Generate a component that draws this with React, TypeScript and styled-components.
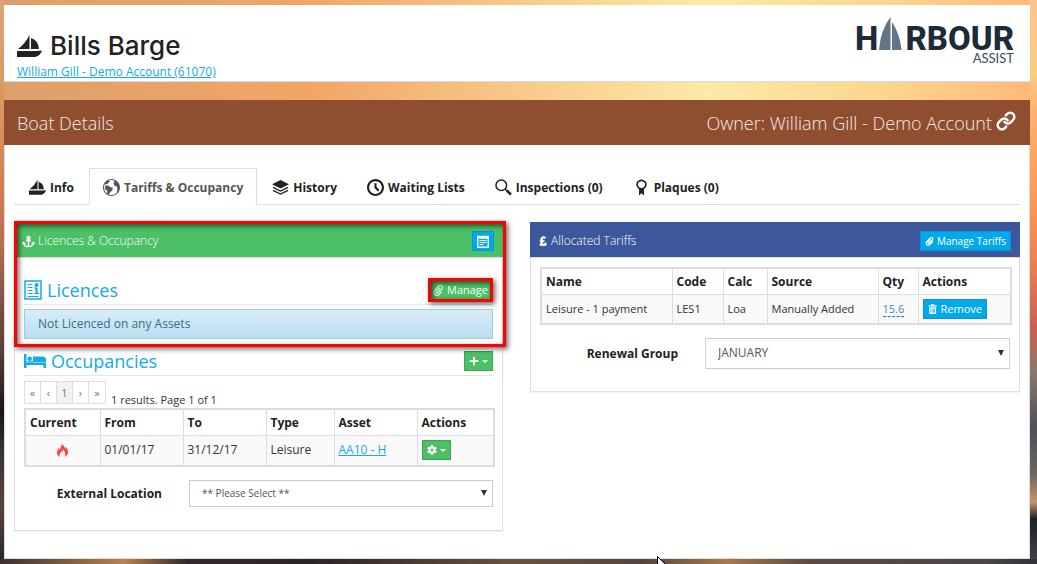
import React from 'react';
import styled, { createGlobalStyle, css } from 'styled-components';
import { FaAnchor, FaCog, FaPaperclip, FaPlus, FaPoundSign } from 'react-icons/fa';
import { ImAttachment, ImBin, ImClock, ImEarth, ImFire } from 'react-icons/im';
import { Link as ChainIcon } from 'lucide-react';

const GlobalStyle = createGlobalStyle`
  * { box-sizing: border-box; }
  html { min-height: 100%; }
  body {
    margin: 0;
    min-height: 100vh;
    font-family: "Open Sans", "Noto Sans", sans-serif;
    font-size: 12px;
    line-height: 16px;
    color: #333;
    background:
      linear-gradient(90deg, #3a3030, #b98250 12%, #33292b 18%, #2b2426 30%, #6b5140 50%, #54453f 62%, #a87a4e 70%, #5c4a44 78%, #4a4548 95%, #33333b) bottom / 100% 5px no-repeat,
      linear-gradient(180deg, #dba574, #d9965f 20%, #d28152 32%, #c06f4e 42%, #8a5548 52%, #5a4038 62%, #1c1313 73%, #3a3233 80%, #55463d 90%, #2a2426) left / 4px 100% no-repeat,
      linear-gradient(180deg, #ffc38a, #fdcb84 13%, #ffb070 20%, #ff9a58 34%, #f08050 46%, #cc6050 58%, #8a7868 66%, #50505a 76%, #6a6660 84%, #c89468 89%, #202028 92%, #44444a) right / 7px 100% no-repeat,
      linear-gradient(90deg, #dca06c, #f2a566 30%, #fde9a8 68%, #fbd68f 85%, #ffb878);
  }
`;

const Page = styled.div`
  display: flex;
  flex-direction: column;
  gap: 18px;
  padding: 5px 7px 5px 4px;
  min-height: 100vh;
`;

const TitleCard = styled.header`
  display: flex;
  justify-content: space-between;
  height: 77px;
  padding: 12px 16px 0 13px;
  background: #fff;
  border-bottom: 1px solid #ddd;
`;

const TitleBlock = styled.div`
  display: flex;
  flex-direction: column;
  padding-top: 11px;
`;

const BoatName = styled.h1`
  display: flex;
  align-items: center;
  gap: 8px;
  margin: 0;
  font: 500 26px/36px Inter, sans-serif;
  color: #222;
`;

const Link = styled.a`
  color: #12ace8;
  text-decoration: underline;
`;

const MainCard = styled.main`
  flex: 1;
  background: #fff;
  border: 1px solid #ddd;
  border-top: 0;
`;

const Banner = styled.div`
  display: flex;
  align-items: center;
  justify-content: space-between;
  height: 45px;
  margin: 0 -1px;
  padding: 0 14px 0 13px;
  background: #904e31;
  color: #f6ebe5;
  font-size: 18px;
  font-weight: 300;
  line-height: 24px;
`;

const Owner = styled.span`
  display: flex;
  align-items: center;
  gap: 4px;
  svg { color: #fff; margin-bottom: 3px; }
`;

const BannerTitle = styled.h2`
  margin: 0;
  font: inherit;
`;

const Tabs = styled.nav`
  display: flex;
  margin: 23px 9px 0;
  border-bottom: 1px solid #ddd;
`;

const Tab = styled.button<{ $active?: boolean }>`
  display: flex;
  align-items: center;
  gap: 4px;
  height: 37px;
  margin-bottom: -1px;
  padding: 2px 14px 0;
  border: 1px solid transparent;
  background: none;
  color: #222;
  font: 700 12px/16px "Open Sans", sans-serif;
  ${(p) => p.$active && css`
    padding: 2px 13px 0;
    color: #555;
    background: #fff;
    border-color: #ddd #ddd #fff;
  `}
`;

const Columns = styled.div`
  display: grid;
  grid-template-columns: minmax(0, 489fr) minmax(0, 490fr);
  align-items: start;
  gap: 27px;
  padding: 17px 9px 27px;
`;

const Panel = styled.section`
  border: 1px solid #ddd;
  border-top: 0;
  box-shadow: 0 1px 1px rgba(0, 0, 0, 0.05);
`;

const PanelHead = styled.div<{ $color: string }>`
  display: flex;
  align-items: center;
  justify-content: space-between;
  height: 36px;
  margin: 0 -1px;
  padding: 3px 9px 0 8px;
  background: ${(p) => p.$color};
  border-bottom: 1px solid #ddd;
`;

const PanelTitle = styled.h3`
  display: flex;
  align-items: center;
  gap: 3px;
  margin: 0;
  color: #fff;
  font-size: 12px;
  font-weight: 300;
`;

const Button = styled.button<{ $tone?: 'green' | 'blue'; $compact?: boolean }>`
  display: inline-flex;
  align-items: center;
  justify-content: center;
  gap: 3px;
  height: 20px;
  padding: 0 4px;
  border: 1px solid ${(p) => (p.$tone === 'green' ? '#3da458' : '#0d94d0')};
  background: ${(p) => (p.$tone === 'green' ? '#4bc067' : '#00a9ec')};
  color: #fff;
  font: 400 ${(p) => (p.$compact ? 10 : 11)}px/16px "Open Sans", sans-serif;
  white-space: nowrap;
`;

const Marked = styled.div<{ $inset: string }>`
  position: relative;
  &::after {
    content: '';
    position: absolute;
    inset: ${(p) => p.$inset};
    border: 3px solid #f00;
    box-shadow: 2px 2px 5px rgba(0, 0, 0, 0.6), inset 2px 2px 5px rgba(0, 0, 0, 0.6);
    pointer-events: none;
  }
`;

const MarkedButton = styled(Marked)`
  display: flex;
`;

const Section = styled.div<{ $top?: number }>`
  padding: ${(p) => p.$top ?? 0}px 9px 0;
`;

const SectionHead = styled.div`
  display: flex;
  align-items: center;
  justify-content: space-between;
  height: 29px;
  border-bottom: 1px solid #e5e5e5;
`;

const SectionTitle = styled.h4`
  display: flex;
  align-items: center;
  gap: 5px;
  margin: 0;
  color: #12ace8;
  font-size: 18px;
  font-weight: 400;
  line-height: 24px;
`;

const Alert = styled.div`
  margin-top: 4px;
  padding: 6px 13px;
  border: 1px solid #9acfea;
  background: linear-gradient(#d9edf7, #b9def0);
  color: #31708f;
`;

const Pager = styled.div`
  display: flex;
  align-items: flex-end;
  gap: 5px;
  height: 32px;
  font-size: 11px;
`;

const PageButtons = styled.div`
  display: flex;
  margin-bottom: 4px;
  border: 1px solid #ddd;
`;

const PageButton = styled.button<{ $current?: boolean }>`
  width: 16px;
  height: 21px;
  padding: 0;
  border: 0;
  border-right: 1px solid #ddd;
  background: ${(p) => (p.$current ? '#f2f2f2' : '#fff')};
  color: #777;
  font: 400 11px/16px "Open Sans", sans-serif;
  &:last-child { border-right: 0; }
`;

const Table = styled.table<{ $small?: boolean }>`
  width: 100%;
  table-layout: fixed;
  border-collapse: collapse;
  border: 2px solid #ddd;
  th, td {
    padding: 5px 4px 4px;
    border: 1px solid #ddd;
    text-align: left;
    white-space: nowrap;
  }
  th { font-weight: 700; color: #222; }
  td {
    height: ${(p) => (p.$small ? 29 : 30)}px;
    padding: 0 4px;
    background: #f9f9f9;
    font-size: ${(p) => (p.$small ? 11 : 12)}px;
  }
  button { vertical-align: middle; }
`;

const Col = styled.col<{ $w: number }>`
  width: ${(p) => p.$w}px;
`;

const Flame = styled.span`
  display: flex;
  justify-content: center;
  color: #f74844;
`;

const Editable = styled.a`
  color: #428bca;
  text-decoration: none;
  border-bottom: 1px dashed #0088cc;
`;

const Field = styled.div<{ $tall?: boolean }>`
  display: grid;
  grid-template-columns: 138px 1fr;
  align-items: center;
  column-gap: 27px;
  margin-top: 13px;
  padding-bottom: ${(p) => (p.$tall ? 22 : 23)}px;
`;

const Label = styled.label`
  padding-top: 1px;
  font-weight: 700;
  color: #222;
  text-align: right;
`;

const SelectBox = styled.div`
  position: relative;
  svg { position: absolute; right: 6px; top: 50%; margin-top: -3px; pointer-events: none; }
`;

const Select = styled.select<{ $tall?: boolean }>`
  appearance: none;
  display: block;
  width: 100%;
  height: ${(p) => (p.$tall ? 31 : 27)}px;
  padding: 0 12px;
  border: 1px solid #ccc;
  border-radius: 0;
  background: #fff;
  color: #555;
  font: 400 ${(p) => (p.$tall ? 12 : 10)}px/16px "Open Sans", sans-serif;
`;

const Pointer = styled.svg`
  position: absolute;
  left: 657px;
  top: 556px;
  height: 8px;
`;

const Boat = ({ size }: { size: number }) => (
  <svg width={size} height={size} viewBox="0 0 25 25" fill="currentColor" aria-hidden="true">
    <path d="M12.500 1v14H1Q8 10 12.500 1ZM14 4Q21 6 22 15h-8ZM0 17h19l6-.5Q23 22 18 23H0Z" />
  </svg>
);

const Layers = () => (
  <svg width="17" height="17" viewBox="0 0 17 17" fill="none" stroke="currentColor" aria-hidden="true">
    <path d="M8.500 1 17 5.200 8.500 9.500 0 5.200Z" fill="currentColor" stroke="none" />
    <path d="m1 8.300 7.500 3.700L16 8.300M1 11.300 8.500 15 16 11.300" strokeWidth="1.300" />
  </svg>
);

const Magnifier = () => (
  <svg width="17" height="17" viewBox="0 0 17 17" fill="none" stroke="currentColor" aria-hidden="true">
    <circle cx="6.300" cy="6.300" r="5.300" strokeWidth="1.500" />
    <path d="m10.200 10.200 1.800 1.600" strokeWidth="1.500" />
    <path d="m11.700 11.500 4.300 4" strokeWidth="2.600" />
  </svg>
);

const Rosette = () => (
  <svg width="17" height="17" viewBox="0 0 17 17" fill="none" stroke="currentColor" strokeWidth="1.600" aria-hidden="true">
    <path d="M8.500 1.200 10.500 2l1.800 1 .7 2.300-.6 2.200-1.700 1.700-2.200.8-2.200-.8-1.700-1.700L4 5.300 4.700 3l1.800-1Z" />
    <path d="M6 9.500h5V16.500l-2.500-2.200L6 16.500Z" fill="currentColor" stroke="none" />
  </svg>
);

const Newspaper = () => (
  <svg width="18" height="20" viewBox="0 0 18 20" fill="none" stroke="currentColor" aria-hidden="true">
    <path d="M1 1h16v18H1z" strokeWidth="1.500" />
    <path d="M3.500 4.500h5M3.500 7.500h5M3.500 10.500h5M3.500 13.500h5M3.500 16.500h11M10 8h3M10 13.500h5" />
    <path d="M12.500 8v5.500" strokeWidth="2.200" />
    <circle cx="12.500" cy="5" r="2" fill="currentColor" stroke="none" />
  </svg>
);

const Bed = () => (
  <svg width="22" height="14" viewBox="0 0 22 14" fill="currentColor" aria-hidden="true">
    <path d="M0 0h2.500v8.500H22V14h-2.500v-3h-17v3H0Z" />
    <circle cx="5.700" cy="4.700" r="2.300" />
    <path d="M9 2.500h9.500Q22 2.500 22 6v2H9ZM3.500 7.200h6v1.300h-6Z" />
  </svg>
);

const FormIcon = () => (
  <svg width="12" height="13" viewBox="0 0 12 13" fill="none" stroke="currentColor" aria-hidden="true">
    <path d="M.7 1.500h10.600v10.800H.7z" strokeWidth="1.400" />
    <path d="M0 2.500h12" strokeWidth="2.400" />
    <path d="M2.500 5.500h7M2.500 7.500h7M2.500 9.500h4" />
  </svg>
);

const Caret = () => (
  <svg width="6" height="3" viewBox="0 0 6 3" fill="currentColor" aria-hidden="true"><path d="M0 0h6L3 3Z" /></svg>
);

const Arrow = () => (
  <svg width="6" height="6" viewBox="0 0 6 6" fill="#333" aria-hidden="true"><path d="M0 0h6L3 6Z" /></svg>
);

const Logo = () => (
  <svg width="160" height="52" viewBox="-2 0 160 52" role="img" aria-label="Harbour Assist">
    <g fill="#1d2b39" fontFamily="Roboto, sans-serif" fontWeight="800" fontSize="33">
      <text x="-1" y="33">H</text>
      <text x="158" y="33" textAnchor="end">RBOUR</text>
    </g>
    <path d="M34.500 0v33H23Q24.500 13 34.500 0ZM36 5Q44 17 45.500 33H36Z" fill="#627486" />
    <text x="158" y="46" textAnchor="end" fill="#394c5f" fontFamily="Lato, sans-serif" fontSize="13">ASSIST</text>
  </svg>
);

export default function App() {
  return (
    <>
      <GlobalStyle />
      <Page>
        <TitleCard>
          <TitleBlock>
            <BoatName><Boat size={25} />Bills Barge</BoatName>
            <Link href="#account">William Gill - Demo Account (61070)</Link>
          </TitleBlock>
          <Logo />
        </TitleCard>
        <MainCard>
          <Banner>
            <BannerTitle>Boat Details</BannerTitle>
            <Owner>Owner: William Gill - Demo Account <ChainIcon size={20} strokeWidth={3} /></Owner>
          </Banner>
          <Tabs>
            <Tab><Boat size={17} />Info</Tab>
            <Tab $active><ImEarth size={17} />Tariffs &amp; Occupancy</Tab>
            <Tab><Layers />History</Tab>
            <Tab><ImClock size={17} />Waiting Lists</Tab>
            <Tab><Magnifier />Inspections (0)</Tab>
            <Tab><Rosette />Plaques (0)</Tab>
          </Tabs>
          <Columns>
            <Panel>
              <Marked $inset="-1px -4px -8px -1px">
                <PanelHead $color="#4bc067">
                  <PanelTitle><FaAnchor size={13} color="#fff" />Licences &amp; Occupancy</PanelTitle>
                  <Button aria-label="Form"><FormIcon /></Button>
                </PanelHead>
                <Section $top={18}>
                  <SectionHead>
                    <SectionTitle><Newspaper />Licences</SectionTitle>
                    <MarkedButton $inset="-2px 0">
                      <Button $tone="green"><ImAttachment size={11} />Manage</Button>
                    </MarkedButton>
                  </SectionHead>
                  <Alert>Not Licenced on any Assets</Alert>
                </Section>
              </Marked>
              <Section $top={8}>
                <SectionHead>
                  <SectionTitle><Bed />Occupancies</SectionTitle>
                  <Button $tone="green" aria-label="Add occupancy"><FaPlus size={10} /><Caret /></Button>
                </SectionHead>
                <Pager>
                  <PageButtons>
                    <PageButton>«</PageButton>
                    <PageButton>‹</PageButton>
                    <PageButton $current>1</PageButton>
                    <PageButton>›</PageButton>
                    <PageButton>»</PageButton>
                  </PageButtons>
                  1 results. Page 1 of 1
                </Pager>
                <Table>
                  <colgroup>
                    <Col $w={75} /><Col $w={83} /><Col $w={83} /><Col $w={68} /><Col $w={83} /><Col $w={77} />
                  </colgroup>
                  <thead>
                    <tr><th>Current</th><th>From</th><th>To</th><th>Type</th><th>Asset</th><th>Actions</th></tr>
                  </thead>
                  <tbody>
                    <tr>
                      <td><Flame><ImFire size={13} /></Flame></td>
                      <td>01/01/17</td>
                      <td>31/12/17</td>
                      <td>Leisure</td>
                      <td><Link href="#asset">AA10 - H</Link></td>
                      <td><Button $tone="green" aria-label="Occupancy actions"><FaCog size={10} /><Caret /></Button></td>
                    </tr>
                  </tbody>
                </Table>
                <Field>
                  <Label htmlFor="location">External Location</Label>
                  <SelectBox>
                    <Select id="location"><option>** Please Select **</option></Select>
                    <Arrow />
                  </SelectBox>
                </Field>
              </Section>
            </Panel>
            <Panel>
              <PanelHead $color="#3d579c">
                <PanelTitle><FaPoundSign size={10} stroke="#fff" strokeWidth={40} />Allocated Tariffs</PanelTitle>
                <Button $compact><FaPaperclip size={9} />Manage Tariffs</Button>
              </PanelHead>
              <Section $top={9}>
                <Table $small>
                  <colgroup>
                    <Col $w={131} /><Col $w={51} /><Col $w={44} /><Col $w={111} /><Col $w={40} /><Col $w={93} />
                  </colgroup>
                  <thead>
                    <tr><th>Name</th><th>Code</th><th>Calc</th><th>Source</th><th>Qty</th><th>Actions</th></tr>
                  </thead>
                  <tbody>
                    <tr>
                      <td>Leisure - 1 payment</td>
                      <td>LES1</td>
                      <td>Loa</td>
                      <td>Manually Added</td>
                      <td><Editable href="#qty">15.6</Editable></td>
                      <td><Button><ImBin size={10} />Remove</Button></td>
                    </tr>
                  </tbody>
                </Table>
                <Field $tall>
                  <Label htmlFor="renewal">Renewal Group</Label>
                  <SelectBox>
                    <Select id="renewal" $tall><option>JANUARY</option></Select>
                    <Arrow />
                  </SelectBox>
                </Field>
              </Section>
            </Panel>
          </Columns>
        </MainCard>
      </Page>
      <Pointer width="9" viewBox="0 0 9 8" aria-hidden="true"><path d="M.5.5v9l9 0Z" fill="#fff" stroke="#000" /></Pointer>
    </>
  );
}
